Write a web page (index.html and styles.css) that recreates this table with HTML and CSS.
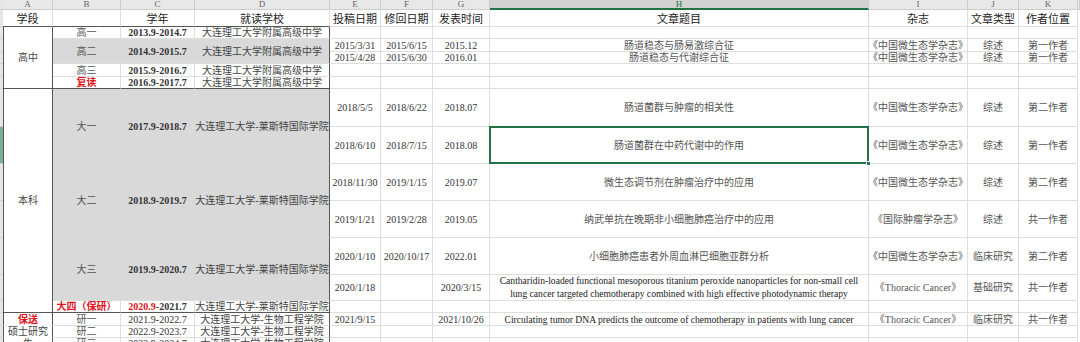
FILE: index.html
```html
<!DOCTYPE html>
<html lang="zh">
<head>
<meta charset="utf-8">
<title>Sheet</title>
<link rel="stylesheet" href="styles.css">
</head>
<body>
<div class="sheet">
  <!-- column letters -->
  <div class="rh"></div>
  <div class="ch">A</div><div class="ch">B</div><div class="ch">C</div><div class="ch">D</div>
  <div class="ch">E</div><div class="ch">F</div><div class="ch">G</div><div class="ch ch-sel">H</div>
  <div class="ch">I</div><div class="ch">J</div><div class="ch">K</div><div class="ch"></div>

  <!-- row 1 headers -->
  <div class="rh"></div>
  <div class="c hd bk">学段</div><div class="c hd bk"></div><div class="c hd bk">学年</div><div class="c hd bk">就读学校</div>
  <div class="c hd">投稿日期</div><div class="c hd">修回日期</div><div class="c hd">发表时间</div><div class="c hd">文章题目</div>
  <div class="c hd">杂志</div><div class="c hd">文章类型</div><div class="c hd">作者位置</div><div class="f"></div>

  <!-- 27-39 -->
  <div class="rh"></div>
  <div class="c a r5 bk cn">高中</div>
  <div class="c mute">高一</div><div class="c b">2013.9-2014.7</div><div class="c d">大连理工大学附属高级中学</div>
  <div class="c"></div><div class="c"></div><div class="c"></div><div class="c"></div><div class="c"></div><div class="c"></div><div class="c"></div><div class="f"></div>

  <!-- 39-52 -->
  <div class="rh"></div>
  <div class="c g gr r2 mute">高二</div><div class="c g gr r2 b">2014.9-2015.7</div><div class="c g d r2">大连理工大学附属高级中学</div>
  <div class="c">2015/3/31</div><div class="c">2015/6/15</div><div class="c">2015.12</div><div class="c t">肠道稳态与肠易激综合征</div>
  <div class="c t">《中国微生态学杂志》</div><div class="c t">综述</div><div class="c t">第一作者</div><div class="f"></div>

  <!-- 52-64 -->
  <div class="rh"></div>
  <div class="c">2015/4/28</div><div class="c">2015/6/30</div><div class="c">2016.01</div><div class="c t">肠道稳态与代谢综合征</div>
  <div class="c t">《中国微生态学杂志》</div><div class="c t">综述</div><div class="c t">第一作者</div><div class="f"></div>

  <!-- 64-77 -->
  <div class="rh"></div>
  <div class="c mute">高三</div><div class="c b">2015.9-2016.7</div><div class="c d">大连理工大学附属高级中学</div>
  <div class="c"></div><div class="c"></div><div class="c"></div><div class="c"></div><div class="c"></div><div class="c"></div><div class="c"></div><div class="f"></div>

  <!-- 77-89 -->
  <div class="rh"></div>
  <div class="c bk red">复读</div><div class="c b bk">2016.9-2017.7</div><div class="c d bk">大连理工大学附属高级中学</div>
  <div class="c"></div><div class="c"></div><div class="c"></div><div class="c"></div><div class="c"></div><div class="c"></div><div class="c"></div><div class="f"></div>

  <!-- 89-127 -->
  <div class="rh"></div>
  <div class="c a r7 bk cn">本科</div>
  <div class="c g gr gb r2 mute">大一</div><div class="c g gr gb r2 b">2017.9-2018.7</div><div class="c g gb d r2">大连理工大学-莱斯特国际学院</div>
  <div class="c">2018/5/5</div><div class="c">2018/6/22</div><div class="c">2018.07</div><div class="c t">肠道菌群与肿瘤的相关性</div>
  <div class="c t">《中国微生态学杂志》</div><div class="c t">综述</div><div class="c t">第二作者</div><div class="f"></div>

  <!-- 127-164 -->
  <div class="rh rh-sel"></div>
  <div class="c">2018/6/10</div><div class="c">2018/7/15</div><div class="c">2018.08</div>
  <div class="c t sel">肠道菌群在中药代谢中的作用<span class="handle"></span></div>
  <div class="c t">《中国微生态学杂志》</div><div class="c t">综述</div><div class="c t">第一作者</div><div class="f"></div>

  <!-- 164-201 -->
  <div class="rh"></div>
  <div class="c g gr gb r2 mute">大二</div><div class="c g gr gb r2 b">2018.9-2019.7</div><div class="c g gb d r2">大连理工大学-莱斯特国际学院</div>
  <div class="c">2018/11/30</div><div class="c">2019/1/15</div><div class="c">2019.07</div><div class="c t">微生态调节剂在肿瘤治疗中的应用</div>
  <div class="c t">《中国微生态学杂志》</div><div class="c t">综述</div><div class="c t">第二作者</div><div class="f"></div>

  <!-- 201-238 -->
  <div class="rh"></div>
  <div class="c">2019/1/21</div><div class="c">2019/2/28</div><div class="c">2019.05</div><div class="c t">纳武单抗在晚期非小细胞肺癌治疗中的应用</div>
  <div class="c t">《国际肿瘤学杂志》</div><div class="c t">综述</div><div class="c t">共一作者</div><div class="f"></div>

  <!-- 238-275 -->
  <div class="rh"></div>
  <div class="c g gr r2 mute">大三</div><div class="c g gr r2 b">2019.9-2020.7</div><div class="c g d r2">大连理工大学-莱斯特国际学院</div>
  <div class="c">2020/1/10</div><div class="c">2020/10/17</div><div class="c">2022.01</div><div class="c t">小细胞肺癌患者外周血淋巴细胞亚群分析</div>
  <div class="c t">《中国微生态学杂志》</div><div class="c t">临床研究</div><div class="c t">第二作者</div><div class="f"></div>

  <!-- 275-301 -->
  <div class="rh"></div>
  <div class="c">2020/1/18</div><div class="c"></div><div class="c">2020/3/15</div>
  <div class="c en wrap">Cantharidin-loaded functional mesoporous titanium peroxide nanoparticles for non-small cell<br>lung cancer targeted chemotherapy combined with high effective photodynamic therapy</div>
  <div class="c t">《Thoracic Cancer》</div><div class="c t">基础研究</div><div class="c t">共一作者</div><div class="f"></div>

  <!-- 301-313 -->
  <div class="rh"></div>
  <div class="c bk red">大四（保研）</div><div class="c b bk"><span class="red-t">2020.9</span>-2021.7</div><div class="c d bk">大连理工大学-莱斯特国际学院</div>
  <div class="c"></div><div class="c"></div><div class="c"></div><div class="c"></div><div class="c"></div><div class="c"></div><div class="c"></div><div class="f"></div>

  <!-- 313-326 -->
  <div class="rh"></div>
  <div class="c a nb red">保送</div>
  <div class="c mute">研一</div><div class="c">2021.9-2022.7</div><div class="c d">大连理工大学-生物工程学院</div>
  <div class="c">2021/9/15</div><div class="c"></div><div class="c">2021/10/26</div>
  <div class="c en">Circulating tumor DNA predicts the outcome of chemotherapy in patients with lung cancer</div>
  <div class="c t">《Thoracic Cancer》</div><div class="c t">临床研究</div><div class="c t">共一作者</div><div class="f"></div>

  <!-- 326-338 -->
  <div class="rh"></div>
  <div class="c a nb cn">硕士研究</div>
  <div class="c mute">研二</div><div class="c">2022.9-2023.7</div><div class="c d">大连理工大学-生物工程学院</div>
  <div class="c"></div><div class="c"></div><div class="c"></div><div class="c"></div><div class="c"></div><div class="c"></div><div class="c"></div><div class="f"></div>

  <!-- 338-350 -->
  <div class="rh"></div>
  <div class="c a nb cn">生</div>
  <div class="c mute">研三</div><div class="c">2023.9-2024.7</div><div class="c d">大连理工大学-生物工程学院</div>
  <div class="c"></div><div class="c"></div><div class="c"></div><div class="c"></div><div class="c"></div><div class="c"></div><div class="c"></div><div class="f"></div>
</div>
</body>
</html>
```

FILE: styles.css
```css
* { box-sizing: border-box; }
html, body {
  margin: 0;
  height: 342px;
  overflow: hidden;
  background: #fff;
}
body {
  font-family: "Liberation Serif", "Noto Sans CJK SC", serif;
  font-size: 10px;
  color: #333;
}
.sheet {
  display: grid;
  grid-template-columns: 3px 50px 68px 74px 135px 51px 52px 57px 379px 99px 51px 59px 2px;
  grid-template-rows: 10px 17px 12px 13px 12px 13px 12px 38px 37px 37px 37px 37px 26px 12px 13px 12px 12px;
}
.c {
  display: flex;
  align-items: center;
  justify-content: center;
  white-space: nowrap;
  line-height: 11px;
  border-right: 1px solid #dedede;
  border-bottom: 1px solid #dedede;
}
.f { background: #fff; }
.rh {
  background: #e6e6e6;
  border-bottom: 1px solid #d2d2d2;
}
.rh-sel { background: #7fae95; }
.ch {
  display: flex;
  align-items: center;
  justify-content: center;
  background: #e8e8e8;
  color: #666;
  font-size: 9px;
  line-height: 9px;
  border-right: 1px solid #cdcdcd;
  border-bottom: 1px solid #cdcdcd;
}
.ch-sel {
  background: #d2d2d2;
  color: #217346;
  border-bottom: 2px solid #217346;
}
.hd {
  font-family: "Noto Sans CJK SC", sans-serif;
  font-size: 11px;
  color: #222;
}
.bk { border-bottom-color: #555; }
.a {
  border-left: 1px solid #555;
  border-right-color: #555;
}
.nb { border-bottom-color: transparent; }
.r2 { grid-row: span 2; }
.r5 { grid-row: span 5; }
.r7 { grid-row: span 7; }
.cn { color: #444; }
.mute { color: #555; }
.b { font-weight: bold; color: #333; }
.d {
  color: #444;
  border-right-color: #555;
}
.g { background: #d9d9d9; }
.gr { border-right-color: #d9d9d9; }
.gb { border-bottom-color: #d9d9d9; }
.red { color: #e0121b; font-weight: bold; }
.red-t { color: #e0121b; }
.t { color: #555; }
.en {
  font-size: 9.6px;
  color: #222;
}
.wrap {
  white-space: normal;
  text-align: center;
  line-height: 12.5px;
}
.sel { position: relative; }
.sel::after {
  content: "";
  position: absolute;
  top: -1px;
  left: -1px;
  right: -1px;
  bottom: -1px;
  border: 2px solid #217346;
  z-index: 1;
}
.handle {
  position: absolute;
  right: -3px;
  bottom: -3px;
  width: 5px;
  height: 5px;
  background: #217346;
  border: 1px solid #fff;
  z-index: 2;
}
```
